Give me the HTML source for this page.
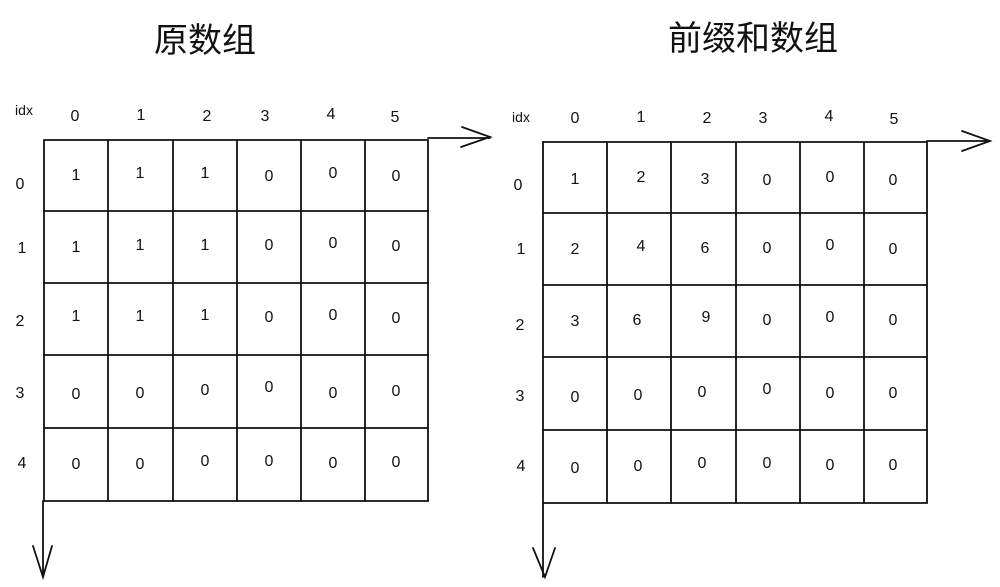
<!DOCTYPE html>
<html><head><meta charset="utf-8"><style>
html,body{margin:0;padding:0;background:#fff;width:1000px;height:587px;overflow:hidden}
svg text{font-family:"Liberation Sans","Noto Sans CJK SC",sans-serif;fill:#111}
</style></head><body>
<svg width="1000" height="587" viewBox="0 0 1000 587" xmlns="http://www.w3.org/2000/svg">
<text x="205" y="52" font-size="34" text-anchor="middle">原数组</text>
<text x="753" y="50" font-size="34" text-anchor="middle">前缀和数组</text>
<g fill="none" stroke="#111" stroke-width="1.8" stroke-linecap="round">
<!-- left grid -->
<path d="M44 140H428M44 211H428M44 283H428M44 355H428M44 428H428M44 501H428"/>
<path d="M44 140V501M108 140V501M173 140V501M237 140V501M301 140V501M365 140V501M428 140V501"/>
<path d="M428 138H490M462 127L490 137L461 147" />
<path d="M43 501V577M33 546L43 577L52 546"/>
<!-- right grid -->
<path d="M543 142H927M543 213H927M543 285H927M543 357H927M543 430H927M543 503H927"/>
<path d="M543 142V503M607 142V503M671 142V503M736 142V503M800 142V503M864 142V503M927 142V503"/>
<path d="M927 141H990M962 131L990 141L962 151"/>
<path d="M543 503V577M533 548L545 577L555 548"/>
</g>
<g font-size="16" text-anchor="middle">
<text x="24" y="115" font-size="14">idx</text>
<text x="75" y="121">0</text><text x="141" y="120">1</text><text x="207" y="121">2</text><text x="265" y="121">3</text><text x="331" y="119">4</text><text x="395" y="122">5</text>
<text x="20" y="189">0</text><text x="22" y="253">1</text><text x="20" y="326">2</text><text x="20" y="398">3</text><text x="22" y="468">4</text>
<text x="76" y="180">1</text><text x="140" y="178">1</text><text x="205" y="178">1</text><text x="269" y="181">0</text><text x="333" y="178">0</text><text x="396" y="181">0</text>
<text x="76" y="252">1</text><text x="140" y="250">1</text><text x="205" y="250">1</text><text x="269" y="250">0</text><text x="333" y="248">0</text><text x="396" y="251">0</text>
<text x="76" y="321">1</text><text x="140" y="321">1</text><text x="205" y="320">1</text><text x="269" y="322">0</text><text x="333" y="320">0</text><text x="396" y="323">0</text>
<text x="76" y="399">0</text><text x="140" y="398">0</text><text x="205" y="395">0</text><text x="269" y="392">0</text><text x="333" y="398">0</text><text x="396" y="396">0</text>
<text x="76" y="469">0</text><text x="140" y="469">0</text><text x="205" y="466">0</text><text x="269" y="466">0</text><text x="333" y="468">0</text><text x="396" y="467">0</text>
<text x="521" y="122" font-size="14">idx</text>
<text x="575" y="123">0</text><text x="641" y="122">1</text><text x="707" y="123">2</text><text x="763" y="123">3</text><text x="829" y="121">4</text><text x="894" y="124">5</text>
<text x="518" y="190">0</text><text x="521" y="254">1</text><text x="520" y="330">2</text><text x="520" y="401">3</text><text x="521" y="471">4</text>
<text x="575" y="184">1</text><text x="641" y="182">2</text><text x="705" y="184">3</text><text x="767" y="185">0</text><text x="830" y="182">0</text><text x="893" y="185">0</text>
<text x="575" y="254">2</text><text x="641" y="251">4</text><text x="705" y="253">6</text><text x="767" y="253">0</text><text x="830" y="250">0</text><text x="893" y="254">0</text>
<text x="575" y="326">3</text><text x="637" y="325">6</text><text x="706" y="322">9</text><text x="767" y="325">0</text><text x="830" y="322">0</text><text x="893" y="325">0</text>
<text x="575" y="402">0</text><text x="638" y="400">0</text><text x="702" y="397">0</text><text x="767" y="394">0</text><text x="830" y="398">0</text><text x="893" y="398">0</text>
<text x="575" y="473">0</text><text x="638" y="471">0</text><text x="702" y="468">0</text><text x="767" y="468">0</text><text x="830" y="470">0</text><text x="893" y="470">0</text>
</g>
</svg>
</body></html>
